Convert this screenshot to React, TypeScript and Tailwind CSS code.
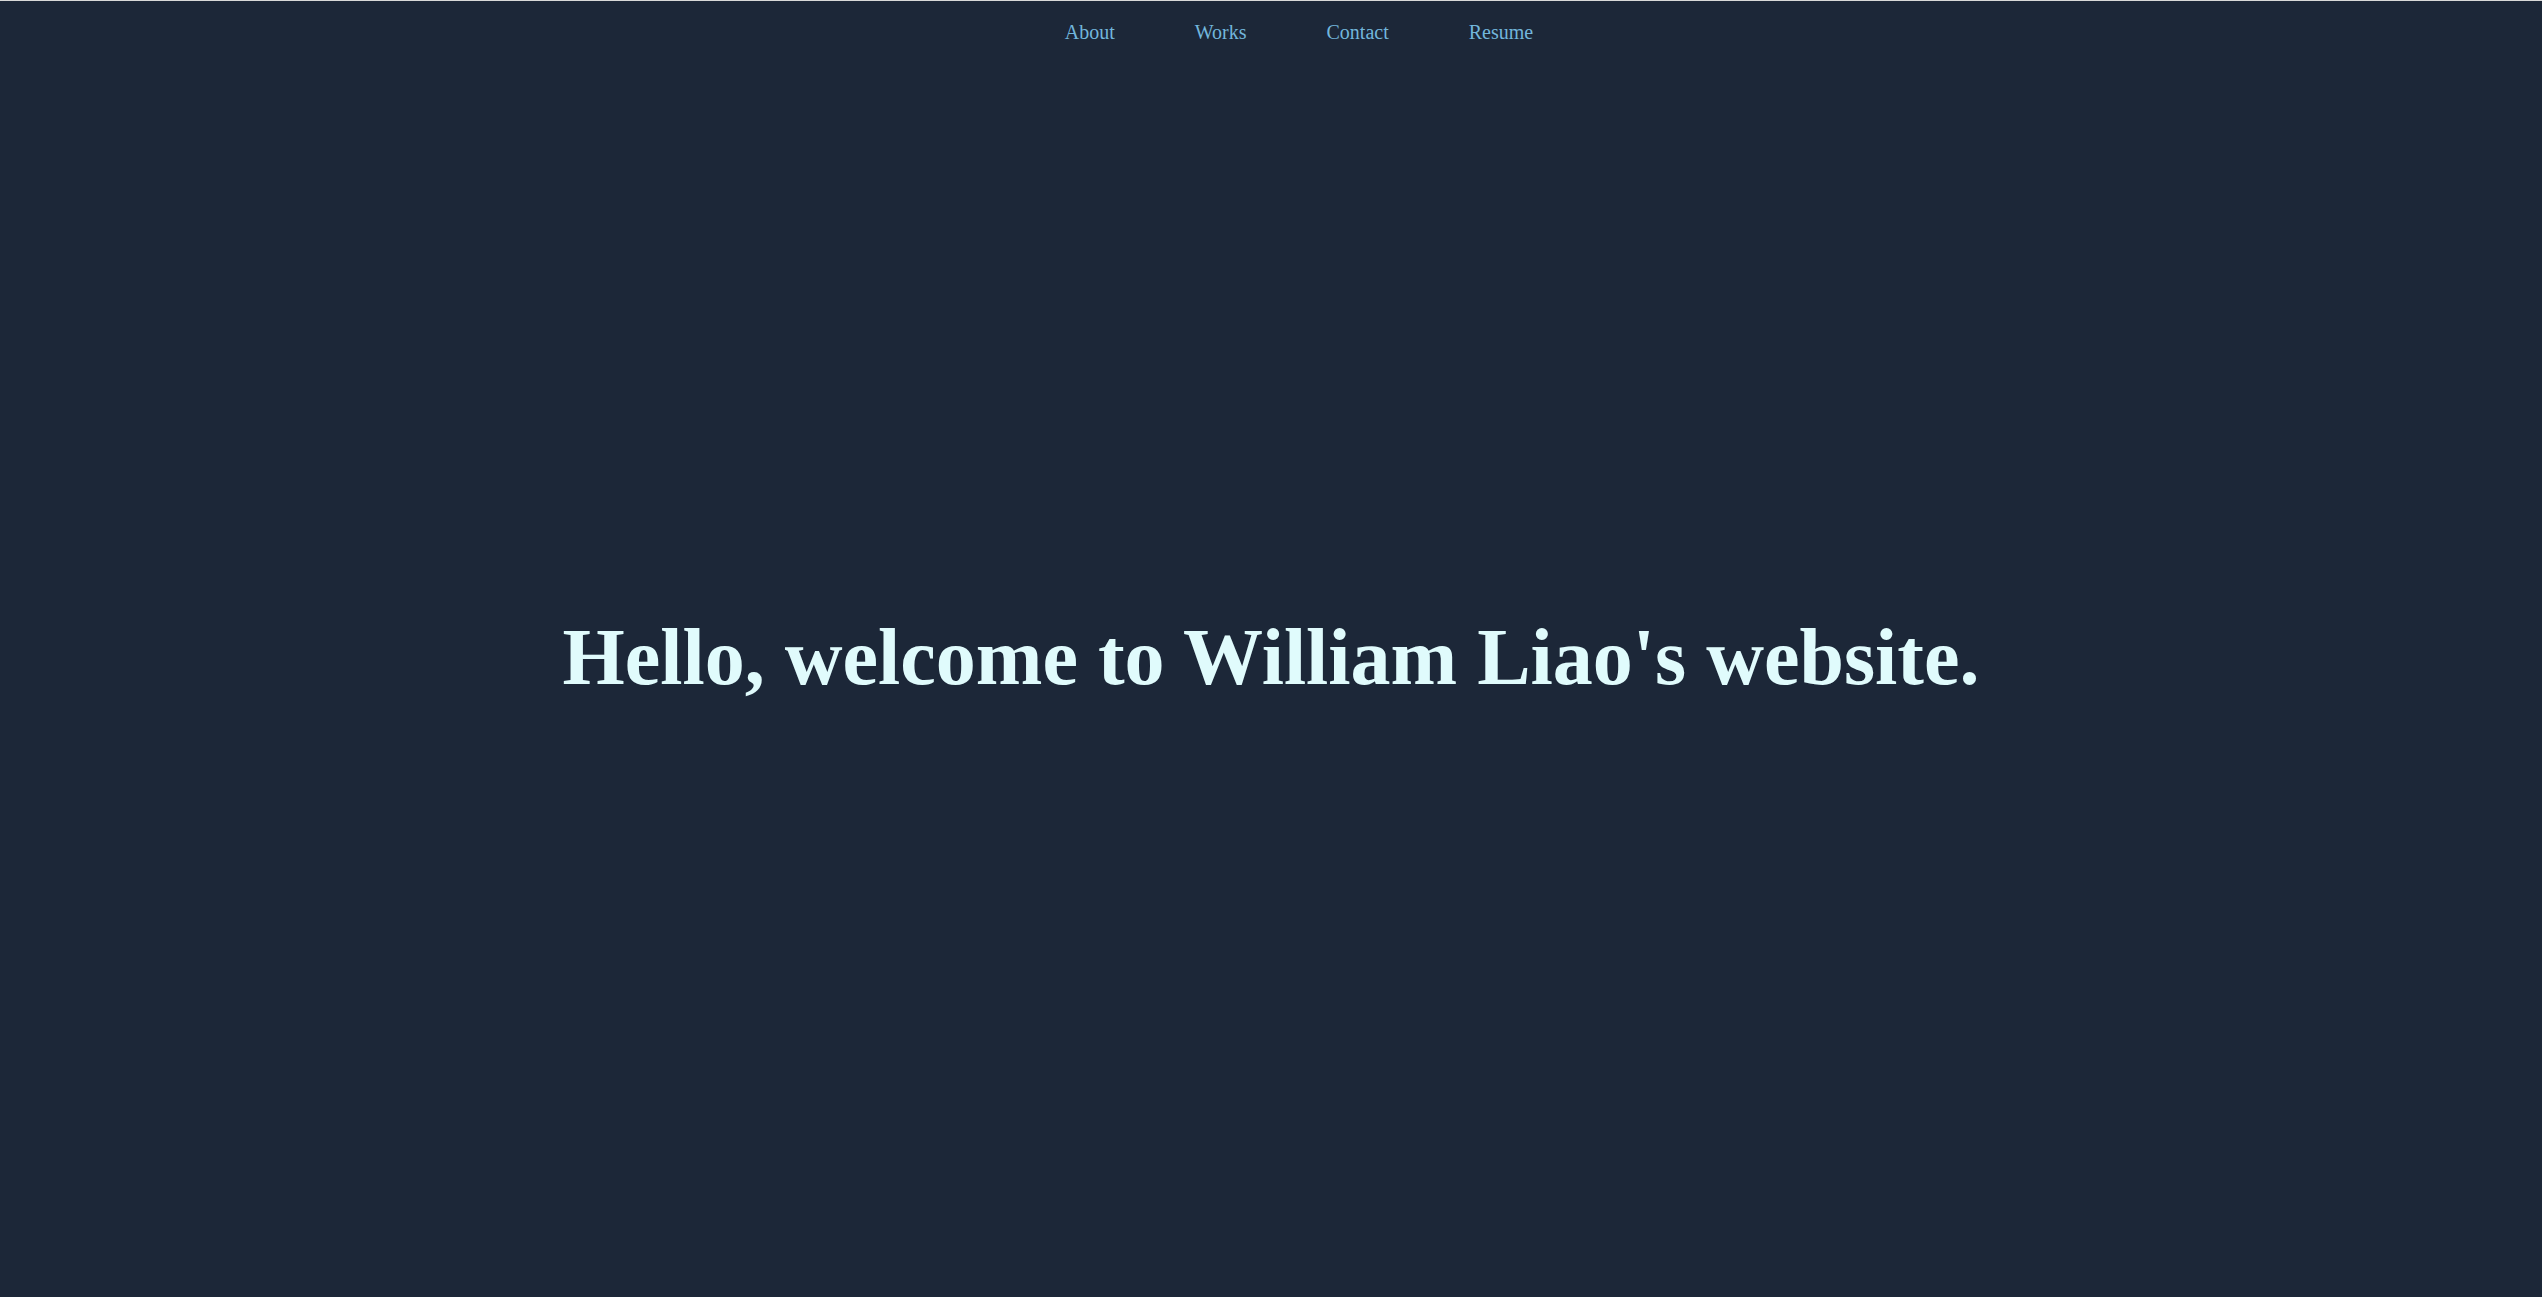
export default function App() {
  const links = ["About", "Works", "Contact", "Resume"];
  return (
    <div
      className="w-full h-[1297px] bg-[#1c2738] border-t border-[#d9d9d9] flex flex-col"
      style={{ fontFamily: '"Liberation Serif", "Times New Roman", serif' }}
    >
      <nav className="flex justify-center gap-[80px] pl-[56px] pt-[20px] text-[20px] leading-[23px] text-[#72b6dc]">
        {links.map((l) => (
          <a key={l} href="#" className="block">
            {l}
          </a>
        ))}
      </nav>
      <main className="flex justify-center pt-[567px]">
        <h1 className="text-[80px] font-bold leading-[92px] text-[#e0fbfc]">
          Hello, welcome to William Liao's website.
        </h1>
      </main>
    </div>
  );
}
